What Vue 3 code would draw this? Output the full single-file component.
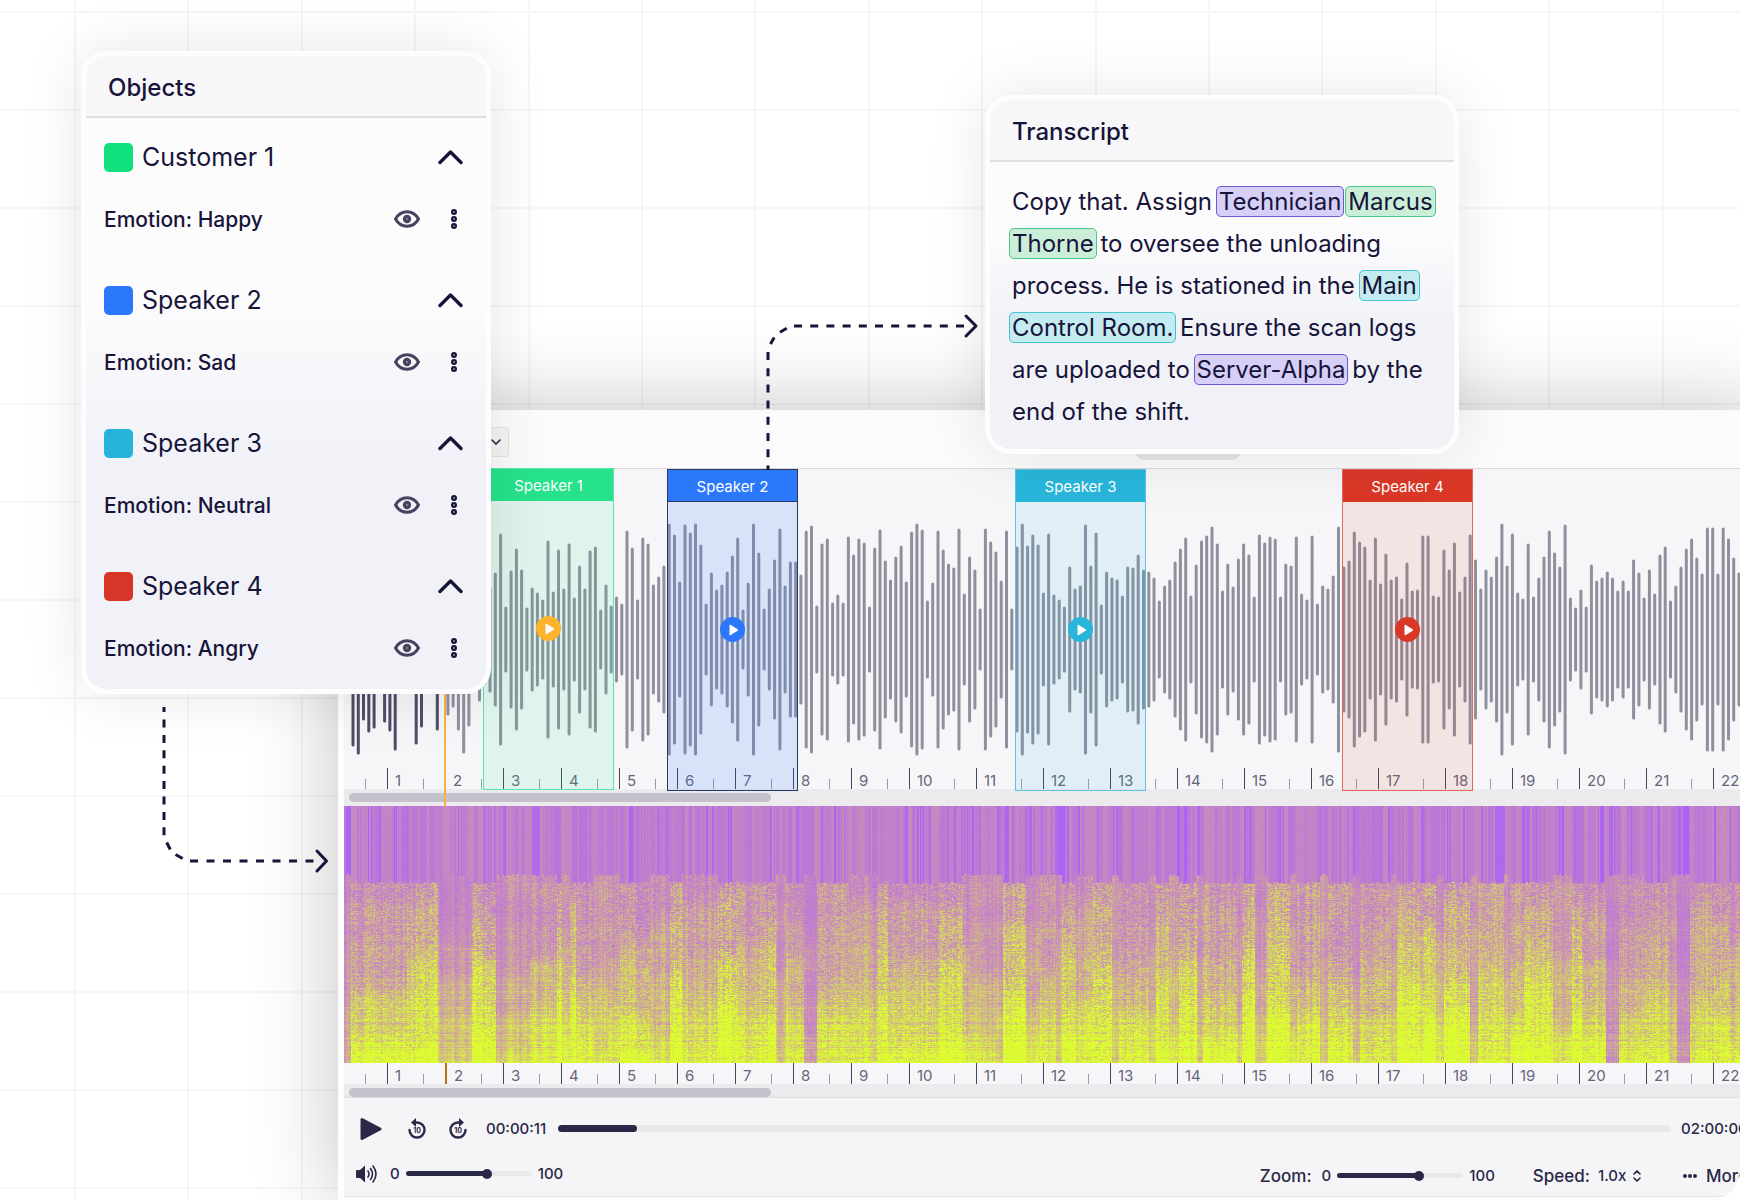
<script setup>
import { ref, computed, onMounted } from "vue";

// Speakers shown in the objects panel
const objects = ref([
  { name: "Customer 1", emotion: "Happy", color: "#10df7e", open: true },
  { name: "Speaker 2", emotion: "Sad", color: "#2c78fd", open: true },
  { name: "Speaker 3", emotion: "Neutral", color: "#28b3da", open: true },
  { name: "Speaker 4", emotion: "Angry", color: "#d63628", open: true },
]);

// Transcript split into plain text and tagged words
const transcript = [
  { text: "Copy that. Assign " },
  { text: "Technician", tag: "purple" },
  { text: " " },
  { text: "Marcus", tag: "green" },
  { text: " " },
  { text: "Thorne", tag: "green" },
  { text: " to oversee the unloading process. He is stationed in the " },
  { text: "Main", tag: "cyan" },
  { text: " " },
  { text: "Control Room.", tag: "cyan" },
  { text: " Ensure the scan logs are uploaded to " },
  { text: "Server-Alpha", tag: "purple" },
  { text: " by the end of the shift." },
];

// Marked regions on the timeline, start is in pixels from the left of the track
const regions = [
  { name: "Speaker 1", start: 139, type: "green" },
  { name: "Speaker 2", start: 323, type: "blue" },
  { name: "Speaker 3", start: 671, type: "cyan" },
  { name: "Speaker 4", start: 998, type: "red" },
];

const seconds = 23;

// How far every bar in the waveform reaches below the middle
const peaks = [
  117, 125, 91, 103, 99, 50, 93, 102, 121, 55, 48, 60, 115, 98, 52, 44, 101, 57, 86, 78, 101, 124, 97, 50, 72,
  55, 63, 77, 116, 43, 79, 101, 80, 42, 62, 57, 50, 109, 58, 100, 61, 106, 52, 84, 61, 99, 103, 40, 65, 44,
  53, 46, 119, 102, 50, 112, 106, 65, 73, 84, 126, 115, 68, 125, 117, 126, 105, 46, 77, 60, 65, 78, 94, 112, 40,
  67, 126, 97, 41, 61, 90, 121, 64, 88, 88, 75, 119, 124, 44, 106, 111, 47, 55, 47, 113, 95, 111, 107, 43, 102,
  120, 89, 70, 93, 104, 68, 118, 126, 120, 49, 67, 119, 100, 86, 82, 121, 56, 93, 80, 41, 121, 108, 98, 69, 119,
  41, 103, 126, 104, 115, 105, 57, 116, 55, 50, 43, 83, 61, 64, 125, 84, 117, 45, 78, 72, 70, 54, 83, 82, 95,
  80, 78, 72, 49, 64, 70, 88, 101, 112, 54, 85, 109, 114, 123, 106, 59, 86, 63, 91, 106, 95, 53, 115, 107, 113,
  111, 53, 86, 84, 113, 56, 50, 114, 46, 64, 61, 74, 123, 83, 89, 118, 108, 103, 70, 112, 66, 96, 70, 73, 51,
  87, 59, 60, 114, 114, 54, 53, 100, 80, 107, 58, 73, 115, 90, 61, 80, 73, 93, 126, 84, 116, 57, 51, 106, 53,
  72, 93, 119, 97, 83, 125, 52, 42, 60, 43, 85, 69, 72, 78, 72, 59, 69, 59, 90, 77, 52, 80, 56, 95, 103,
  49, 64, 83, 101, 111, 92, 76, 122, 122, 76, 122, 111, 92, 77, 70, 84, 66, 90,
];
const barStep = 5.27;
const middle = 160;
const topCut = 21; // the upper half is shorter than the lower one
const playedBars = 18;

const barsPath = (from, to) =>
  peaks
    .slice(from, to)
    .map((h, i) => {
      const x = (9 + (from + i) * barStep).toFixed(1);
      return `M${x} ${middle - h + topCut + 1}V${middle + h - 1}`;
    })
    .join("");

// Loudness steps of the spectrogram: [first column, level]
const levels = [
  [0, -0.6], [7, 0.55], [63, 0.75], [94, 0.05], [128, 0.9], [152, 0.05], [186, 0.4], [213, 1], [218, 0.3],
  [226, 0.8], [232, 0.5], [250, 0.15], [264, 0.45], [276, 0.6], [306, 0.25], [326, 0.85], [338, 0.45],
  [374, 0.95], [393, 0.5], [421, 0.8], [432, 0.1], [442, 0.5], [460, -0.7], [473, 0.5], [505, 0.4],
  [534, 0.85], [544, 0.55], [595, 0.8], [618, 0.4], [626, 0.1], [652, -0.1], [659, 0.85], [682, 0.2],
  [696, 0.35], [712, -0.3], [718, 0.75], [732, 0.35], [749, 0.95], [768, -0.1], [775, 0.55], [805, 0.05],
  [812, 0.75], [825, 0.2], [835, 0.95], [853, 0.1], [859, 0.6], [893, 0.1], [898, 0.9], [911, 0.05],
  [923, 0.95], [946, 0.3], [953, 0.65], [976, 0], [984, 0.65], [1009, -0.1], [1016, 0.6], [1047, 0],
  [1053, 0.8], [1079, 0.95], [1092, 0.15], [1100, 0.9], [1126, -0.2], [1134, 0.6], [1160, 0.15],
  [1166, 0.6], [1180, 0.75], [1209, 0.25], [1228, 1], [1238, 0.5], [1262, -0.8], [1275, 0.4], [1300, 0.6],
  [1326, 0.05], [1333, -0.8], [1346, 0.5], [1370, 0.7], [1385, 0.5],
];

const spectrogram = ref(null);

// Small seeded random so the spectrogram looks the same every time
let seed = 7;
const random = () => {
  seed = (seed * 1664525 + 1013904223) % 4294967296;
  return seed / 4294967296;
};

// purple -> mauve -> yellow
const colorStops = [[166, 94, 252], [201, 139, 188], [220, 252, 48]];
const colorAt = (value) => {
  const v = Math.min(1, Math.max(0, value)) * 2;
  const a = colorStops[v < 1 ? 0 : 1];
  const b = colorStops[v < 1 ? 1 : 2];
  const k = v < 1 ? v : v - 1;
  return a.map((c, i) => c + (b[i] - c) * k);
};

const drawSpectrogram = () => {
  const canvas = spectrogram.value;
  const width = canvas.clientWidth;
  const height = canvas.clientHeight;
  canvas.width = width;
  canvas.height = height;
  const ctx = canvas.getContext("2d");
  const image = ctx.createImageData(width, height);
  const rows = Array.from({ length: height }, () => (random() - 0.5) * 0.16);
  const grains = new Array(height).fill(0);
  let bands = [];
  let index = -1;
  let stripe = 0.3;
  let drift = 0;

  for (let x = 0; x < width; x++) {
    while (index < levels.length - 1 && levels[index + 1][0] <= x) {
      index++;
      // every step gets its own louder and quieter bands
      bands = Array.from({ length: 12 }, () => (random() - 0.5) * 0.14);
    }
    const level = levels[index][1];
    if (random() < 0.5) {
      const pick = random();
      stripe = pick < 0.13 ? 0.05 + random() * 0.12 : pick < 0.6 ? 0.25 + random() * 0.12 : 0.38 + random() * 0.1;
    }
    drift = drift * 0.5 + (random() - 0.5) * 0.14;
    const edge = (level < 0.5 ? 67 : 75) + random() * 3;
    const curve = level > 0.7 ? 1.3 : 1.9;

    for (let y = 0; y < height; y++) {
      let value;
      if (y < edge) {
        value = stripe + (random() - 0.5) * 0.03;
      } else {
        const t = (y - 68) / (height - 68);
        const band = (t * 10) % 1;
        const row = Math.floor(t * 10);
        if (random() < 0.6) grains[y] = random() - 0.5;
        value = 0.49 + level * 0.08 + Math.pow(t, curve) * (0.33 + 0.24 * level);
        value += bands[row] * (1 - band) + bands[row + 1] * band;
        value += drift + rows[y] * t + grains[y] * (0.16 + 0.24 * Math.max(level, 0));
      }
      const [r, g, b] = colorAt(value);
      const p = (y * width + x) * 4;
      image.data[p] = r;
      image.data[p + 1] = g;
      image.data[p + 2] = b;
      image.data[p + 3] = 255;
    }
  }
  ctx.putImageData(image, 0, 0);
};

onMounted(drawSpectrogram);

// Player state
const position = ref(6.5);
const volume = ref(66);
const zoom = ref(66);
const speed = ref("1.0x");

// The filled part ends under the middle of the thumb
const fill = (value, thumb) => {
  const end = `calc(${value}% + ${(0.5 - value / 100) * thumb}px)`;
  return `linear-gradient(to right, #2a2847 ${end}, #e9e9ec ${end})`;
};
const positionFill = computed(() => fill(position.value, 7));
const volumeFill = computed(() => fill(volume.value, 10));
const zoomFill = computed(() => fill(zoom.value, 10));

// Background grid
const gridX = Array.from({ length: 30 }, (_, i) => Math.round(75 + i * 113.4));
const gridY = Array.from({ length: 20 }, (_, i) => 12 + i * 98);
</script>

<template>
  <main class="page">
    <svg class="grid" aria-hidden="true">
      <path :d="gridX.map((x) => `M${x} 0V2000`).join('')" />
      <path :d="gridY.map((y) => `M0 ${y}H3600`).join('')" />
    </svg>

    <section class="editor">
      <header class="toolbar">
        <button class="dropdown" aria-label="Track options">
          <svg width="10" height="6" viewBox="0 0 10 6"><path d="M1 1l4 4 4-4" /></svg>
        </button>
      </header>

      <div class="timeline">
        <svg class="wave">
          <path class="played" :d="barsPath(0, playedBars)" />
          <path class="rest" :d="barsPath(playedBars)" />
        </svg>
        <div class="ruler">
          <div v-for="n in seconds" :key="n" class="second" :class="{ wide: n > 10, first: n === 1 }">
            <span v-if="n > 1" class="number">{{ n - 1 }}</span>
            <i class="half"></i>
          </div>
        </div>
        <div
          v-for="region in regions"
          :key="region.name"
          class="region"
          :class="region.type"
          :style="{ left: region.start + 'px' }"
        >
          <div class="region-name">{{ region.name }}</div>
          <button class="region-play" :aria-label="'Play ' + region.name">
            <svg width="10" height="12" viewBox="0 0 10 12"><path d="M1 1l8 5-8 5z" /></svg>
          </button>
        </div>
        <div class="playhead"></div>
      </div>
      <div class="scroll"><div class="thumb"></div></div>

      <canvas ref="spectrogram" class="spectrogram"></canvas>
      <div class="ruler lower">
        <div
          v-for="n in seconds"
          :key="n"
          class="second"
          :class="{ wide: n > 10, first: n === 1, current: n === 3 }"
        >
          <span v-if="n > 1" class="number">{{ n - 1 }}</span>
          <i class="half"></i>
        </div>
      </div>
      <div class="scroll small"><div class="thumb"></div></div>

      <footer class="player">
        <div class="player-row seek-row">
          <button class="icon-btn play" aria-label="Play">
            <svg width="22" height="24" viewBox="0 0 22 24">
              <path d="M2 2.5v19L20 12z" fill="#2a2847" stroke="#2a2847" stroke-width="3" stroke-linejoin="round" />
            </svg>
          </button>
          <button class="icon-btn back" aria-label="Back 10 seconds">
            <svg width="20" height="22" viewBox="0 0 20 22">
              <path d="M2.5 12a7.5 7.5 0 1 0 7.500-7.500H8" class="line" />
              <path d="M9 0v9L4 4.500z" fill="#2a2847" />
              <text x="10" y="14.500">10</text>
            </svg>
          </button>
          <button class="icon-btn forward" aria-label="Forward 10 seconds">
            <svg width="20" height="22" viewBox="0 0 20 22">
              <path d="M17.500 12A7.500 7.500 0 1 1 10 4.500h2" class="line" />
              <path d="M11 0v9l5-4.500z" fill="#2a2847" />
              <text x="10" y="14.500">10</text>
            </svg>
          </button>
          <span class="time">00:00:11</span>
          <input
            v-model="position"
            class="seek"
            type="range"
            step="0.1"
            aria-label="Position"
            :style="{ background: positionFill }"
          />
          <span class="time">02:00:00</span>
        </div>

        <div class="player-row">
          <svg class="volume-icon" width="22" height="18" viewBox="0 0 22 18" aria-hidden="true">
            <path d="M0 6q0-1 1-1h3l5-4.500v17L4 13H1q-1 0-1-1z" fill="#2a2847" />
            <path d="M12 6q2 3 0 6M14.500 3.500q4 5.500 0 11M17 1q6 8 0 16" class="line thin" />
          </svg>
          <label class="slider">
            <span>0</span>
            <input v-model="volume" type="range" aria-label="Volume" :style="{ background: volumeFill }" />
            <span>100</span>
          </label>
          <div class="options">
            <label class="slider">
              <span class="caption">Zoom:</span>
              <span>0</span>
              <input v-model="zoom" type="range" :style="{ background: zoomFill }" />
              <span>100</span>
            </label>
            <label class="speed">
              <span class="caption">Speed:</span>
              <select v-model="speed">
                <option>0.5x</option>
                <option>1.0x</option>
                <option>2.0x</option>
              </select>
              <svg width="8" height="12" viewBox="0 0 8 12"><path d="M1 4l3-3 3 3M1 8l3 3 3-3" class="line thin" /></svg>
            </label>
            <button class="more">
              <svg width="14" height="4" viewBox="0 0 14 4">
                <g fill="#2a2847">
                  <circle cx="2" cy="2" r="2" /><circle cx="7" cy="2" r="2" /><circle cx="12" cy="2" r="2" />
                </g>
              </svg>
              More
            </button>
          </div>
        </div>
      </footer>
    </section>

    <div class="tab"></div>

    <section class="panel objects">
      <h2>Objects</h2>
      <div class="list">
        <div v-for="item in objects" :key="item.name" class="object">
          <div class="object-row">
            <span class="swatch" :style="{ background: item.color }"></span>
            <span class="name">{{ item.name }}</span>
            <button class="icon-btn" aria-label="Collapse" @click="item.open = !item.open">
              <svg width="26" height="16" viewBox="0 0 26 16">
                <path
                  d="M2 13.500L12.500 3 23 13.500"
                  fill="none"
                  stroke="#17143a"
                  stroke-width="3.400"
                  stroke-linecap="round"
                  stroke-linejoin="round"
                />
              </svg>
            </button>
          </div>
          <div v-if="item.open" class="object-row">
            <span class="emotion">Emotion: {{ item.emotion }}</span>
            <button class="icon-btn" aria-label="Show or hide">
              <svg width="26" height="18" viewBox="0 0 26 18">
                <path
                  d="M1.500 9C4 4.500 8 1.700 13 1.700S22 4.500 24.500 9C22 13.500 18 16.300 13 16.300S4 13.500 1.500 9z"
                  fill="none"
                  stroke="#45435f"
                  stroke-width="3"
                  stroke-linejoin="round"
                />
                <circle cx="13" cy="9" r="2.700" fill="#77768c" stroke="#45435f" stroke-width="3" />
              </svg>
            </button>
            <button class="icon-btn dots" aria-label="More options">
              <svg width="20" height="22" viewBox="0 0 20 22">
                <g fill="#8c8b9c" stroke="#17143a" stroke-width="2">
                  <circle cx="10" cy="4" r="2" /><circle cx="10" cy="11" r="2" /><circle cx="10" cy="18" r="2" />
                </g>
              </svg>
            </button>
          </div>
        </div>
      </div>
    </section>

    <section class="panel transcript">
      <h2>Transcript</h2>
      <p>
        <template v-for="(part, i) in transcript" :key="i"
          ><mark v-if="part.tag" :class="part.tag">{{ part.text }}</mark
          ><template v-else>{{ part.text }}</template></template
        >
      </p>
    </section>

    <svg class="connector to-editor" width="170" height="176" viewBox="160 702 170 176" aria-hidden="true">
      <path d="M164 707v5M164 719.500v116" stroke-dasharray="8 7.400" />
      <path d="M166.700 842.500l3.600 7M175.500 854.500l7.200 4" />
      <path d="M190 861h124" stroke-dasharray="8 8.500" />
      <path d="M317 851l9.500 10-9.500 10" class="head" />
    </svg>
    <svg class="connector to-transcript" width="216" height="160" viewBox="764 310 216 160" aria-hidden="true">
      <path d="M768 352v118" stroke-dasharray="8 8.200" />
      <path d="M770.500 344l3.700-6.500M780 332.300l6.700-4" />
      <path d="M794 326h170" stroke-dasharray="8 8.200" />
      <path d="M966 316l10 10-10 10" class="head" />
    </svg>
  </main>
</template>

<style>
body {
  margin: 0;
  background: #fff;
}
</style>

<style scoped>
* {
  box-sizing: border-box;
}
.page {
  position: relative;
  overflow: hidden;
  padding: 410px 0 0 338px;
  border-bottom-right-radius: 30px;
  background: #fff;
  color: #17143a;
  font-family: Inter, "Liberation Sans", sans-serif;
}
button,
select,
input {
  margin: 0;
  padding: 0;
  border: 0;
  background: none;
  color: inherit;
  font: inherit;
}
svg {
  display: block;
}
.line {
  fill: none;
  stroke: #2a2847;
  stroke-width: 2.4;
  stroke-linecap: round;
}
.thin {
  stroke-width: 1.6;
}
.grid {
  position: absolute;
  top: 0;
  left: 0;
  width: 100%;
  height: 100%;
  fill: none;
  stroke: #f6f6f6;
  stroke-width: 2;
}

/* Editor window */
.editor {
  position: relative;
  margin-right: -30px;
  padding: 0 0 3px 6px;
  background: #fdfdfe;
  box-shadow: 0 0 80px rgba(0, 0, 0, 0.24);
}
.toolbar {
  display: flex;
  align-items: center;
  height: 59px;
  padding: 6px 0 0 65px;
  border-bottom: 1px solid #d9d9dc;
  background: #fbfbfc;
}
.dropdown {
  display: flex;
  align-items: center;
  justify-content: flex-end;
  width: 100px;
  height: 30px;
  padding-right: 7px;
  border: 1px solid #e3e3e6;
  border-radius: 4px;
  background: #f4f4f5;
}
.dropdown path {
  fill: none;
  stroke: #2a2847;
  stroke-width: 1.6;
  stroke-linecap: round;
}
.timeline {
  position: relative;
  background: #f6f6f9;
}
.wave {
  width: 100%;
  height: 299px;
}
.wave path {
  stroke-width: 3;
  stroke-linecap: round;
}
.played {
  stroke: #4e4d68;
}
.rest {
  stroke: #908f9e;
}
.ruler {
  display: flex;
  overflow: hidden;
  height: 21px;
  background: #f6f6f9;
}
.second {
  display: flex;
  flex: none;
  align-items: flex-end;
  width: 58px;
  padding-right: 21px;
  border-left: 1px solid #45445c;
}
.second.wide {
  width: 67px;
}
.second.first {
  width: 43px;
  border-left: 0;
}
.second.current {
  border-left: 2px solid #b4741a;
}
.number {
  padding-left: 7px;
  color: #66657a;
  font-size: 15px;
  line-height: 16px;
}
.half {
  width: 1px;
  height: 10px;
  margin-left: auto;
  background: #9b9aa8;
}
.region {
  position: absolute;
  top: 0;
  bottom: -2px;
  width: 131px;
  border: 1px solid;
}
.region-name {
  height: 32px;
  color: #fff;
  font-size: 15px;
  line-height: 34px;
  text-align: center;
}
.region-play {
  position: absolute;
  top: 147px;
  left: 52px;
  display: flex;
  align-items: center;
  justify-content: center;
  width: 25px;
  height: 25px;
  padding-left: 2px;
  border-radius: 50%;
}
.region-play path {
  fill: #fff;
  stroke: #fff;
  stroke-linejoin: round;
}
.green.region {
  top: -1px;
  bottom: -1px;
  border-color: #5fe3ae;
  background: rgba(38, 226, 139, 0.11);
}
.green .region-name {
  background: #26e28b;
}
.green .region-play {
  background: #fdb32c;
}
.blue.region {
  border-color: #2e3763;
  background: rgba(44, 120, 253, 0.15);
}
.blue .region-name {
  border-bottom: 1px solid #2e3763;
}
.blue .region-name,
.blue .region-play {
  background: #2c78fd;
}
.cyan.region {
  border-color: #5cc4e0;
  background: rgba(40, 182, 218, 0.11);
}
.cyan .region-name,
.cyan .region-play {
  background: #28b6da;
}
.red.region {
  border-color: #e0695d;
  background: rgba(218, 55, 39, 0.1);
}
.red .region-name,
.red .region-play {
  background: #da3727;
}
.playhead {
  position: absolute;
  top: 0;
  bottom: -17px;
  left: 100px;
  width: 2px;
  background: #fbb040;
}
.scroll {
  height: 17px;
  padding: 4px 5px;
  background: #ebebed;
}
.scroll.small {
  height: 14px;
  border-bottom: 1px solid #e0e0e3;
}
.thumb {
  width: 422px;
  height: 9px;
  border-radius: 5px;
  background: #c4c3cb;
}
.spectrogram {
  display: block;
  width: 100%;
  height: 257px;
}

/* Player */
.player {
  padding: 8px 0 0 12px;
  border-bottom: 1px solid #e3e3e6;
  background: #f5f5f8;
  color: #2a2847;
  font-size: 17px;
  font-weight: 500;
}
.player-row {
  display: flex;
  align-items: center;
  height: 45px;
  padding-right: 22px;
}
.seek-row {
  padding-right: 27px;
}
.icon-btn {
  display: flex;
  flex: none;
  cursor: pointer;
}
.icon-btn text {
  fill: #2a2847;
  font-size: 7px;
  font-weight: 700;
  text-anchor: middle;
}
.play {
  margin-left: 4px;
}
.back {
  margin-left: 25px;
}
.forward {
  margin: 0 18px 0 21px;
}
.time {
  flex: none;
  width: 62px;
  font-size: 15px;
}
input[type="range"] {
  width: 126px;
  height: 5px;
  border-radius: 3px;
  appearance: none;
}
input[type="range"]::-webkit-slider-thumb {
  width: 10px;
  height: 10px;
  border-radius: 50%;
  background: #2a2847;
  appearance: none;
}
input.seek {
  flex: 1;
  height: 7px;
  margin: 0 10px;
  border-radius: 4px;
}
input.seek::-webkit-slider-thumb {
  width: 7px;
  height: 7px;
}
.slider,
.speed {
  display: flex;
  align-items: center;
  gap: 6px;
  font-size: 15px;
}
.volume-icon {
  margin-right: 12px;
}
.caption {
  margin-right: 4px;
  font-size: 17px;
}
.options {
  display: flex;
  align-items: center;
  gap: 38px;
  margin-left: auto;
  padding-top: 4px;
}
.speed {
  gap: 4px;
}
.speed select {
  width: 31px;
  appearance: none;
}
.more {
  display: flex;
  align-items: center;
  gap: 9px;
  margin-left: 4px;
}

/* Floating panels */
.panel {
  position: absolute;
  overflow: hidden;
  border: 5px solid #fdfdfe;
  border-radius: 26px;
  background: linear-gradient(#fdfcfd 35%, #f1f2f8 65%);
  box-shadow: 0 0 60px rgba(0, 0, 0, 0.1);
}
.panel h2 {
  margin: 0;
  padding: 4px 22px 0;
  border-bottom: 2px solid #dfdfe3;
  background: #f7f6f9;
  font-size: 24px;
  font-weight: 500;
  line-height: 56px;
}
.objects {
  top: 51px;
  left: 81px;
  width: 410px;
}
.list {
  display: flex;
  flex-direction: column;
  gap: 19px;
  padding: 8px 22px 10px 18px;
}
.object-row {
  display: flex;
  align-items: center;
  height: 62px;
}
.swatch {
  width: 29px;
  height: 29px;
  margin-right: 9px;
  border-radius: 5px;
}
.name {
  flex: 1;
  font-size: 25px;
}
.emotion {
  flex: 1;
  font-size: 21px;
  font-weight: 500;
}
.dots {
  margin-left: 24px;
}
.transcript {
  top: 95px;
  left: 985px;
  width: 474px;
}
.transcript p {
  margin: 0;
  padding: 19px 18px 16px 22px;
  font-size: 24px;
  line-height: 42px;
}
mark {
  margin: 0 -3px;
  padding: 0 2px;
  border: 1px solid;
  border-radius: 5px;
  color: inherit;
}
mark.purple {
  border-color: #6e5bd0;
  background: #d6cff8;
}
mark.green {
  border-color: #4cc98a;
  background: #cbeed9;
}
mark.cyan {
  border-color: #45c3cf;
  background: #c4ebef;
}
.tab {
  position: absolute;
  top: 440px;
  left: 1136px;
  width: 104px;
  height: 20px;
  border-radius: 8px;
  background: #e6e6e9;
}
.connector {
  position: absolute;
  fill: none;
  stroke: #17143a;
  stroke-width: 3;
}
.connector .head {
  stroke-linecap: round;
  stroke-linejoin: round;
}
.to-editor {
  top: 702px;
  left: 160px;
}
.to-transcript {
  top: 310px;
  left: 764px;
}
</style>
